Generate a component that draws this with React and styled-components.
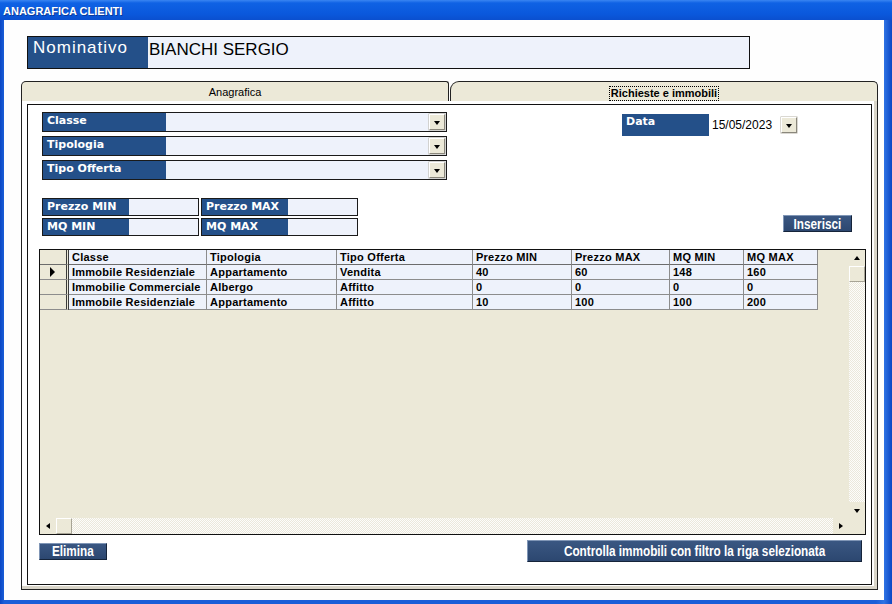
import React from 'react';
import styled, { createGlobalStyle } from 'styled-components';

const GlobalStyle = createGlobalStyle`
  html, body {
    margin: 0;
    padding: 0;
    background: #0a4fd0;
  }
  body {
    font-family: "Liberation Sans", Arial, sans-serif;
  }
  * { box-sizing: border-box; }
`;

const LABEL_BLUE = '#245089';
const FIELD_BG = '#eef2fb';
const BEIGE = '#ece9d8';

const Window = styled.div`
  width: 892px;
  height: 604px;
  display: flex;
  flex-direction: column;
  background: #0a4fd0;
`;

const TitleBar = styled.div`
  height: 20px;
  padding: 5px 0 0 3px;
  background: linear-gradient(#3a85f2 0, #0f62e4 3px, #0a58dc 14px, #0a4fcf 20px);
  color: #fff;
  font: bold 11px "Liberation Sans", Arial, sans-serif;
  text-shadow: 1px 1px 0 #0a3a9a;
  white-space: nowrap;
`;

const Frame = styled.div`
  flex: 1;
  display: flex;
  padding: 0 8px 4px 4px;
  background: linear-gradient(to right, #0a46c4 0, #1a5ed8 4px, #1a5ed8 876px, #2f73e4 884px, #0a46c4 892px);
`;

const Body = styled.div`
  flex: 1;
  display: flex;
  flex-direction: column;
  background: #fefefe;
  padding: 16px 6px 10px 17px;
`;

const NominativoBox = styled.div`
  display: flex;
  margin-left: 6px;
  width: 723px;
  height: 33px;
  border: 1px solid #111;
  font-family: "Liberation Sans", Arial, sans-serif;
  font-size: 17px;
`;

const NominativoLabel = styled.div`
  width: 120px;
  background: ${LABEL_BLUE};
  color: #fff;
  letter-spacing: 1px;
  padding: 1px 0 0 5px;
`;

const NominativoValue = styled.div`
  flex: 1;
  background: ${FIELD_BG};
  color: #000;
  padding: 3px 0 0 1px;
`;

const TabControl = styled.div`
  flex: 1;
  display: flex;
  flex-direction: column;
  margin-top: 12px;
`;

const TabStrip = styled.div`
  display: flex;
  height: 20px;
`;

const Tab = styled.div`
  flex: 1;
  background: ${BEIGE};
  border: 1px solid #222;
  border-bottom: none;
  border-radius: ${(p) => (p.$active ? '9px 5px 0 0' : '5px 3px 0 0')};
  margin-left: ${(p) => (p.$active ? '1px' : '0')};
  display: flex;
  justify-content: center;
  align-items: center;
  padding-top: ${(p) => (p.$active ? '3px' : '0')};
  font-size: 11px;
  font-weight: ${(p) => (p.$active ? 'bold' : 'normal')};
  color: #000;
`;

const FocusText = styled.span`
  outline: 1px dotted #000;
  padding: 0 1px;
  line-height: 13px;
`;

const Panel = styled.div`
  flex: 1;
  display: flex;
  border: 1px solid #222;
  border-top: none;
  padding: 3px 5px 4px 5px;
  background: #fff;
  box-shadow: inset -3px -3px 0 #d9d5c9;
`;

const Inner = styled.div`
  flex: 1;
  display: flex;
  flex-direction: column;
  border: 1px solid #111;
  padding: 7px 5px 0 11px;
  background: #fff;
`;

const FilterArea = styled.div`
  display: flex;
  margin-left: 3px;
`;

const ComboColumn = styled.div`
  display: flex;
  flex-direction: column;
  gap: 4px;
  width: 405px;
`;

const ComboRow = styled.div`
  display: flex;
  height: 20px;
  border: 1px solid #1a1a1a;
`;

const FieldLabel = styled.div`
  width: ${(p) => p.$w}px;
  background: ${LABEL_BLUE};
  color: #fff;
  font: bold 11px "DejaVu Sans", Verdana, sans-serif;
  line-height: 13px;
  padding: 1px 0 0 4px;
  white-space: nowrap;
`;

const ComboField = styled.div`
  flex: 1;
  display: flex;
  justify-content: flex-end;
  align-items: center;
  background: ${(p) => p.$bg || FIELD_BG};
  padding-right: 1px;
  font: 12px "Liberation Sans", Arial, sans-serif;
`;

const ComboText = styled.span`
  flex: 1;
  padding-left: 3px;
  color: #000;
`;

const DropButton = styled.div`
  width: 16px;
  height: 16px;
  display: flex;
  align-items: center;
  justify-content: center;
  background: ${BEIGE};
  border: 1px solid;
  border-color: #fff #8a877c #8a877c #fff;
  box-shadow: 0 0 0 0.5px #b5b2a6;
`;

const ArrowDown = styled.span`
  width: 0;
  height: 0;
  border-left: 3.5px solid transparent;
  border-right: 3.5px solid transparent;
  border-top: 4px solid #000;
  margin-top: 1px;
`;

const ArrowUp = styled.span`
  width: 0;
  height: 0;
  border-left: 3.5px solid transparent;
  border-right: 3.5px solid transparent;
  border-bottom: 4px solid #000;
`;

const ArrowLeft = styled.span`
  width: 0;
  height: 0;
  border-top: 3.5px solid transparent;
  border-bottom: 3.5px solid transparent;
  border-right: 4px solid #000;
`;

const ArrowRight = styled.span`
  width: 0;
  height: 0;
  border-top: 3.5px solid transparent;
  border-bottom: 3.5px solid transparent;
  border-left: 4px solid #000;
`;

const DateGroup = styled.div`
  display: flex;
  height: 22px;
  margin: 2px 0 0 175px;
`;

const DateField = styled(ComboField)`
  width: 88px;
  flex: none;
  font-size: 12px;
  padding-right: 0;
`;

const PriceRow = styled.div`
  display: flex;
  margin: 18px 0 0 3px;
`;

const PriceGrid = styled.div`
  display: grid;
  grid-template-columns: 157px 157px;
  gap: 2px;
`;

const PriceCell = styled.div`
  display: flex;
  height: 18px;
  border: 1px solid #1a1a1a;
`;

const PriceValue = styled.div`
  flex: 1;
  background: ${FIELD_BG};
`;

const ActionButton = styled.button`
  width: ${(p) => p.$w}px;
  height: ${(p) => p.$h}px;
  padding: 0;
  display: flex;
  align-items: center;
  justify-content: center;
  background: linear-gradient(#3a5782, #2c4770);
  border: 1px solid;
  border-color: #8096b6 #15243a #15243a #8096b6;
  color: #fff;
  font-family: "Liberation Sans", Arial, sans-serif;
  font-weight: bold;
  font-size: 14px;
  line-height: 1;
  white-space: nowrap;
  overflow: visible;
`;

/* Arial Narrow look: Liberation Sans Bold squeezed horizontally */
const NarrowText = styled.span`
  display: inline-block;
  transform: scaleX(0.84);
  transform-origin: center;
`;

const InsertButton = styled(ActionButton)`
  margin: auto 14px 4px auto;
`;

const GridFrame = styled.div`
  margin-top: 13px;
  height: 286px;
  border: 1px solid #111;
  background: ${BEIGE};
  display: grid;
  grid-template-columns: 1fr 16px;
  grid-template-rows: 1fr 16px;
`;

const Viewport = styled.div`
  overflow: hidden;
`;

const DataTable = styled.table`
  border-collapse: separate;
  border-spacing: 0;
  table-layout: fixed;
  width: 778px;
  font: bold 11px "Liberation Sans", Arial, sans-serif;
  letter-spacing: 0.25px;
  color: #000;
`;

const HeadCell = styled.th`
  height: 15px;
  padding: 0 0 0 3px;
  text-align: left;
  font-weight: bold;
  background: ${FIELD_BG};
  border-right: 1px solid #8c8c8c;
  border-bottom: 1px solid #6c6c6c;
  line-height: 13px;
  white-space: nowrap;
  overflow: hidden;
`;

const Cell = styled.td`
  height: 15px;
  padding: 0 0 0 3px;
  background: ${FIELD_BG};
  border-right: 1px solid #8c8c8c;
  border-bottom: 1px solid #8c8c8c;
  line-height: 13px;
  white-space: nowrap;
  overflow: hidden;
`;

const SelCell = styled.td`
  height: 15px;
  padding: 0;
  background: ${BEIGE};
  border-right: 3px double #3a3a3a;
  border-bottom: 1px solid #8c8c8c;
  vertical-align: middle;
`;

const SelHead = styled(SelCell).attrs({ as: 'th' })`
  border-bottom: 1px solid #6c6c6c;
`;

const RowPointer = styled.span`
  display: block;
  width: 0;
  height: 0;
  margin-left: 10px;
  border-top: 5px solid transparent;
  border-bottom: 5px solid transparent;
  border-left: 5px solid #000;
`;

const ScrollBar = styled.div`
  display: flex;
  flex-direction: ${(p) => (p.$vertical ? 'column' : 'row')};
  background-color: #fdfdfb;
  background-image: repeating-conic-gradient(#ebe8dc 0 25%, #fdfdfb 0 50%);
  background-size: 2px 2px;
`;

const ScrollArrow = styled.div`
  width: 16px;
  height: 16px;
  flex: none;
  display: flex;
  align-items: center;
  justify-content: center;
  background: ${BEIGE};
`;

const ScrollThumb = styled.div`
  width: 16px;
  height: 16px;
  flex: none;
  background: ${BEIGE};
  border: 1px solid;
  border-color: #fff #a7a496 #a7a496 #fff;
`;

const Spacer = styled.div`
  flex: 1;
`;

const Corner = styled.div`
  background: ${BEIGE};
`;

const ButtonRow = styled.div`
  display: flex;
  align-items: center;
  justify-content: space-between;
  height: 22px;
  margin: 5px 4px 0 0;
`;

const columns = [
  { key: 'classe', title: 'Classe', width: 138 },
  { key: 'tipologia', title: 'Tipologia', width: 130 },
  { key: 'offerta', title: 'Tipo Offerta', width: 136 },
  { key: 'pmin', title: 'Prezzo MIN', width: 99 },
  { key: 'pmax', title: 'Prezzo MAX', width: 98 },
  { key: 'mqmin', title: 'MQ MIN', width: 74 },
  { key: 'mqmax', title: 'MQ MAX', width: 74 },
];

const rows = [
  { classe: 'Immobile Residenziale', tipologia: 'Appartamento', offerta: 'Vendita', pmin: '40', pmax: '60', mqmin: '148', mqmax: '160' },
  { classe: 'Immobilie Commerciale', tipologia: 'Albergo', offerta: 'Affitto', pmin: '0', pmax: '0', mqmin: '0', mqmax: '0' },
  { classe: 'Immobile Residenziale', tipologia: 'Appartamento', offerta: 'Affitto', pmin: '10', pmax: '100', mqmin: '100', mqmax: '200' },
];

function Combo({ label }) {
  return (
    <ComboRow>
      <FieldLabel $w={123}>{label}</FieldLabel>
      <ComboField>
        <DropButton><ArrowDown /></DropButton>
      </ComboField>
    </ComboRow>
  );
}

function PriceInput({ label }) {
  return (
    <PriceCell>
      <FieldLabel $w={86}>{label}</FieldLabel>
      <PriceValue />
    </PriceCell>
  );
}

export default function App() {
  return (
    <>
      <GlobalStyle />
      <Window>
        <TitleBar>ANAGRAFICA CLIENTI</TitleBar>
        <Frame>
          <Body>
            <NominativoBox>
              <NominativoLabel>Nominativo</NominativoLabel>
              <NominativoValue>BIANCHI SERGIO</NominativoValue>
            </NominativoBox>

            <TabControl>
              <TabStrip>
                <Tab>Anagrafica</Tab>
                <Tab $active><FocusText>Richieste e immobili</FocusText></Tab>
              </TabStrip>
              <Panel>
                <Inner>
                  <FilterArea>
                    <ComboColumn>
                      <Combo label="Classe" />
                      <Combo label="Tipologia" />
                      <Combo label="Tipo Offerta" />
                    </ComboColumn>
                    <DateGroup>
                      <FieldLabel $w={87}>Data</FieldLabel>
                      <DateField $bg="#fff">
                        <ComboText>15/05/2023</ComboText>
                        <DropButton><ArrowDown /></DropButton>
                      </DateField>
                    </DateGroup>
                  </FilterArea>

                  <PriceRow>
                    <PriceGrid>
                      <PriceInput label="Prezzo MIN" />
                      <PriceInput label="Prezzo MAX" />
                      <PriceInput label="MQ MIN" />
                      <PriceInput label="MQ MAX" />
                    </PriceGrid>
                    <InsertButton $w={69} $h={17}><NarrowText>Inserisci</NarrowText></InsertButton>
                  </PriceRow>

                  <GridFrame>
                    <Viewport>
                      <DataTable>
                        <colgroup>
                          <col style={{ width: 29 }} />
                          {columns.map((c) => (
                            <col key={c.key} style={{ width: c.width }} />
                          ))}
                        </colgroup>
                        <thead>
                          <tr>
                            <SelHead />
                            {columns.map((c) => (
                              <HeadCell key={c.key}>{c.title}</HeadCell>
                            ))}
                          </tr>
                        </thead>
                        <tbody>
                          {rows.map((r, i) => (
                            <tr key={i}>
                              <SelCell>{i === 0 && <RowPointer />}</SelCell>
                              {columns.map((c) => (
                                <Cell key={c.key}>{r[c.key]}</Cell>
                              ))}
                            </tr>
                          ))}
                        </tbody>
                      </DataTable>
                    </Viewport>
                    <ScrollBar $vertical>
                      <ScrollArrow><ArrowUp /></ScrollArrow>
                      <ScrollThumb />
                      <Spacer />
                      <ScrollArrow><ArrowDown /></ScrollArrow>
                    </ScrollBar>
                    <ScrollBar>
                      <ScrollArrow><ArrowLeft /></ScrollArrow>
                      <ScrollThumb />
                      <Spacer />
                      <ScrollArrow><ArrowRight /></ScrollArrow>
                    </ScrollBar>
                    <Corner />
                  </GridFrame>

                  <ButtonRow>
                    <ActionButton $w={68} $h={17}><NarrowText>Elimina</NarrowText></ActionButton>
                    <ActionButton $w={335} $h={22}>
                      <NarrowText>Controlla immobili con filtro la riga selezionata</NarrowText>
                    </ActionButton>
                  </ButtonRow>
                </Inner>
              </Panel>
            </TabControl>
          </Body>
        </Frame>
      </Window>
    </>
  );
}
